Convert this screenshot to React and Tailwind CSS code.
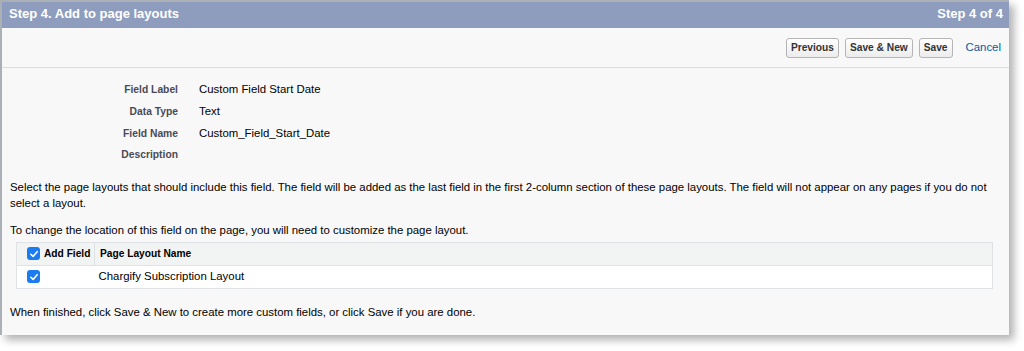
const fields = [
  ['Field Label', 'Custom Field Start Date'],
  ['Data Type', 'Text'],
  ['Field Name', 'Custom_Field_Start_Date'],
  ['Description', ''],
];

function Check() {
  return (
    <span className="inline-flex h-[13px] w-[13px] items-center justify-center rounded-[3px] bg-[#1a7cf0]">
      <svg viewBox="0 0 12 12" className="h-[10px] w-[10px]">
        <path d="M2.2 6.3 L4.9 8.9 L9.8 3.2" fill="none" stroke="white" strokeWidth="1.9" strokeLinecap="round" strokeLinejoin="round" />
      </svg>
    </span>
  );
}

function Btn({ children }) {
  return (
    <button
      type="button"
      className="h-[20px] rounded-[3px] border border-[#b5b5b5] bg-gradient-to-b from-white to-[#ececec] px-[4px] text-[10.2px] font-bold text-[#333]"
    >
      {children}
    </button>
  );
}

export default function App() {
  return (
    <div className="h-[351px] w-[1024px] bg-white font-['Liberation_Sans',Arial,sans-serif] text-[11.4px] text-black">
      <div className="h-[335px] w-[1009px] border-l-2 border-t-2 border-[#aab0b6] bg-[#f8f8f8] shadow-[5px_5px_8px_rgba(0,0,0,0.3)]">
        <div className="flex h-[26px] items-center justify-between bg-[#8e9dbe] pb-[2px] pl-[7px] pr-[6px] text-[13px] font-bold text-white">
          <span>Step 4. Add to page layouts</span>
          <span>Step 4 of 4</span>
        </div>

        <div className="flex h-[40px] items-center justify-end gap-[6px] border-b border-[#dcdcdc] pr-[8px]">
          <Btn>Previous</Btn>
          <Btn>Save &amp; New</Btn>
          <Btn>Save</Btn>
          <a href="#" className="ml-[7px] text-[11.4px] text-[#015ba7]">Cancel</a>
        </div>

        <div className="pt-[11px]">
          {fields.map(([label, value]) => (
            <div key={label} className="flex h-[21.7px] items-center">
              <div className="w-[176px] text-right text-[10.3px] font-bold text-[#4a4a56]">{label}</div>
              <div className="pl-[21px]">{value}</div>
            </div>
          ))}
        </div>

        <div className="px-[8px] pt-[13px]">
          <p className="leading-[16px]">
            Select the page layouts that should include this field. The field will be added as the last field in the first 2-column section of these page layouts. The field will not appear on any pages if you do not select a layout.
          </p>
          <p className="mt-[11px] leading-[16px]">
            To change the location of this field on the page, you will need to customize the page layout.
          </p>

          <table className="ml-[6px] mt-[4px] w-[977px] border-collapse border border-[#e0e3e5] bg-white">
            <thead>
              <tr className="h-[23px] bg-[#f2f3f3] text-left">
                <th className="w-[78px] border-r border-[#e0e3e5] pl-[10px] text-[10.2px] font-bold">
                  <span className="flex items-center gap-[4px]"><Check />Add Field</span>
                </th>
                <th className="pl-[5px] text-[10.2px] font-bold">Page Layout Name</th>
              </tr>
            </thead>
            <tbody>
              <tr className="h-[23px] border-t border-[#e0e3e5]">
                <td className="pl-[10px]"><span className="flex"><Check /></span></td>
                <td className="pl-[4px]">Chargify Subscription Layout</td>
              </tr>
            </tbody>
          </table>

          <p className="mt-[15px]">
            When finished, click Save &amp; New to create more custom fields, or click Save if you are done.
          </p>
        </div>
      </div>
    </div>
  );
}
